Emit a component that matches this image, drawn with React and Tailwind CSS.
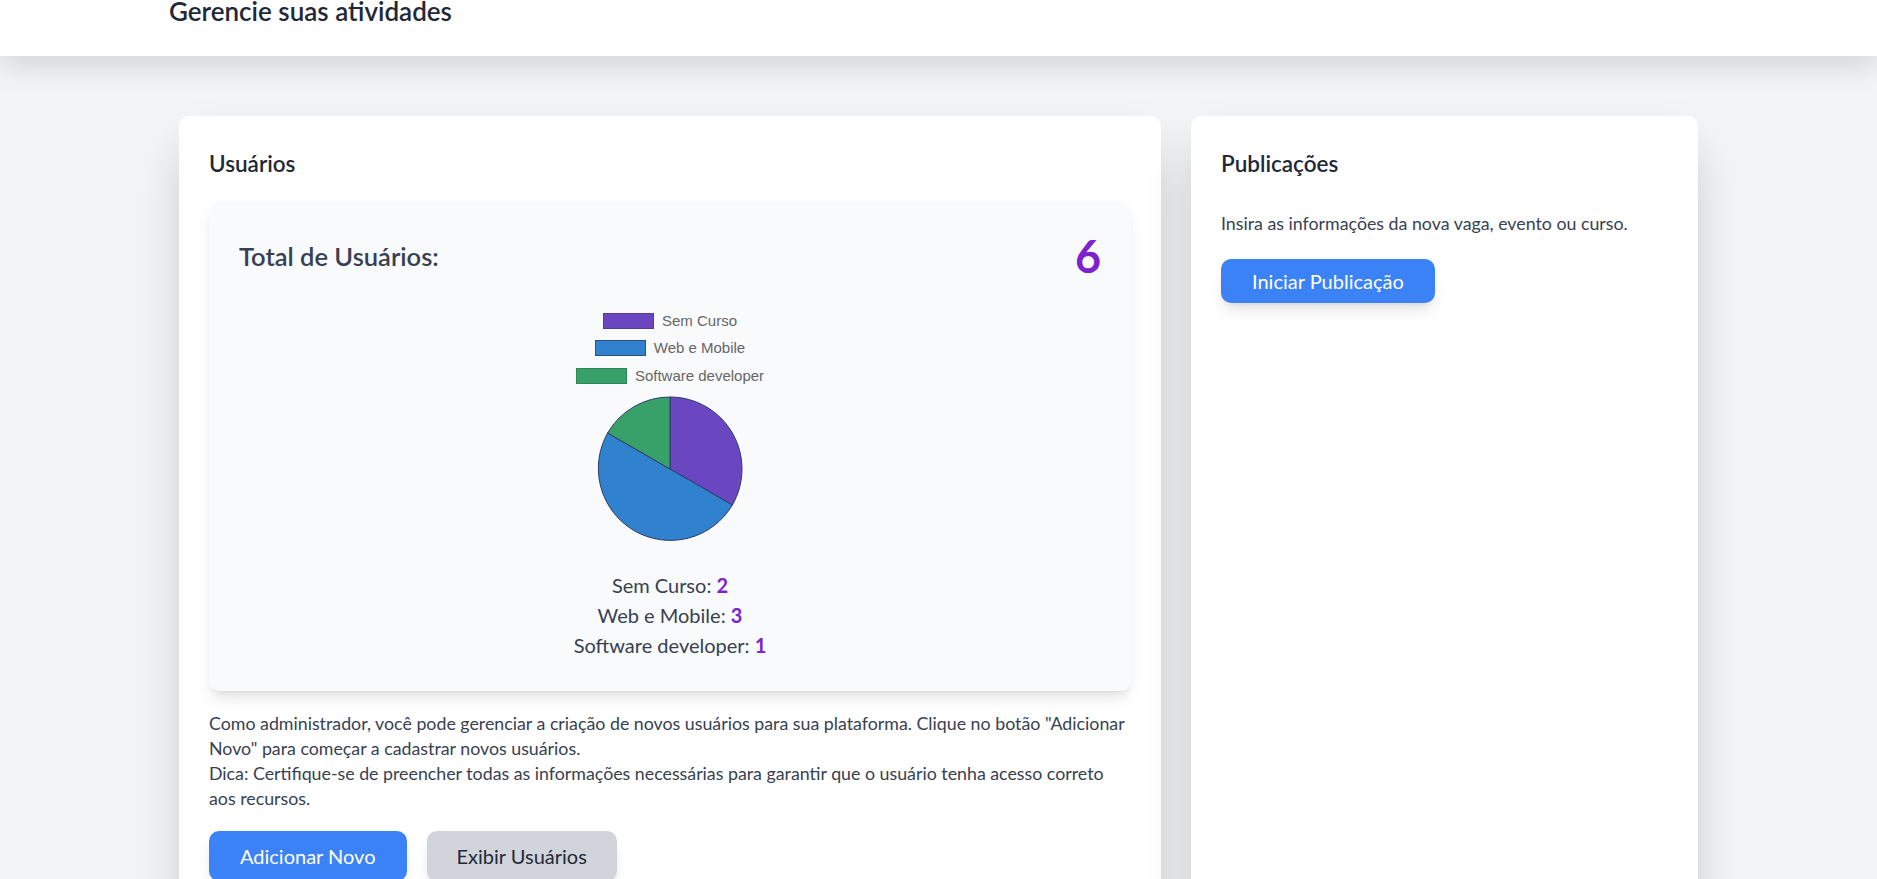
import React from "react";

const stats = [
  { label: "Sem Curso", value: 2, color: "#6b46c1", border: "#553c9a" },
  { label: "Web e Mobile", value: 3, color: "#3182ce", border: "#2c5282" },
  { label: "Software developer", value: 1, color: "#38a169", border: "#2f855a" },
];

// pie drawn by hand, slices start at 12 o'clock and go clockwise
function PieChart() {
  return (
    <svg width="146" height="146" viewBox="0 0 146 146">
      <path
        d="M73 73 L73 1 A72 72 0 0 1 135.35 109 Z"
        fill="#6b46c1"
        stroke="#2d3b66"
        strokeWidth="1"
      />
      <path
        d="M73 73 L135.35 109 A72 72 0 0 1 10.65 37 Z"
        fill="#3182ce"
        stroke="#2d3b66"
        strokeWidth="1"
      />
      <path
        d="M73 73 L10.65 37 A72 72 0 0 1 73 1 Z"
        fill="#38a169"
        stroke="#2d3b66"
        strokeWidth="1"
      />
    </svg>
  );
}

export default function App() {
  return (
    <div className="h-screen overflow-hidden bg-[#f3f4f6] font-['Lato','Noto_Sans',sans-serif]">
      {/* Header */}
      <header className="relative z-10 flex h-[56px] items-start bg-white pl-[169px] shadow-[0_10px_30px_rgba(0,0,0,0.13)]">
        <h1 className="-mt-[2px] text-[26px] font-semibold leading-[26px] text-[#1f2937]">
          Gerencie suas atividades
        </h1>
      </header>

      <main className="flex justify-center gap-[30px] pt-[60px]">
        {/* Usuarios card */}
        <section className="min-h-[820px] w-[982px] rounded-[10px] bg-white p-[30px] shadow-2xl">
          <h2 className="text-[22.5px] font-semibold leading-[35px] text-[#1f2937]">
            Usuários
          </h2>

          <div className="mt-[20px] rounded-[10px] bg-[#f9fafb] px-[30px] pt-[30px] pb-[31px] shadow-lg">
            <div className="flex items-center justify-between">
              <span className="text-[25.5px] font-semibold text-[#374151]">
                Total de Usuários:
              </span>
              <span className="text-[45px] font-bold leading-[50px] text-[#7e22ce]">
                6
              </span>
            </div>

            <div className="mt-[26px] flex flex-col items-center">
              <div className="flex flex-col items-center font-['Liberation_Sans',Arial,sans-serif] text-[15px] text-[#666666]">
                {stats.map((s) => (
                  <div key={s.label} className="flex h-[27.5px] items-center gap-[8px]">
                    <span
                      className="h-[16px] w-[51px] border"
                      style={{ backgroundColor: s.color, borderColor: s.border }}
                    ></span>
                    <span>{s.label}</span>
                  </div>
                ))}
              </div>

              <div className="mt-[6px]">
                <PieChart />
              </div>

              <div className="mt-[28px] flex flex-col items-center text-[20px] leading-[30px] text-[#374151]">
                {stats.map((s) => (
                  <p key={s.label}>
                    {s.label}: <span className="font-bold text-[#7e22ce]">{s.value}</span>
                  </p>
                ))}
              </div>
            </div>
          </div>

          <p className="mt-[20px] text-[17.8px] leading-[25px] text-[#374151]">
            <span className="block whitespace-nowrap">
              Como administrador, você pode gerenciar a criação de novos usuários para sua
              plataforma. Clique no botão "Adicionar
            </span>
            <span className="block whitespace-nowrap">
              Novo" para começar a cadastrar novos usuários.
            </span>
            <span className="block whitespace-nowrap">
              Dica: Certifique-se de preencher todas as informações necessárias para garantir
              que o usuário tenha acesso correto
            </span>
            <span className="block whitespace-nowrap">aos recursos.</span>
          </p>

          <div className="mt-[20px] flex gap-[20px]">
            <button className="rounded-[10px] bg-[#3b82f6] px-[31px] py-[10px] text-[20px] leading-[30px] text-white shadow-lg">
              Adicionar Novo
            </button>
            <button className="rounded-[10px] bg-[#d1d5db] px-[30px] py-[10px] text-[20px] leading-[30px] text-[#1f2937] shadow-lg">
              Exibir Usuários
            </button>
          </div>
        </section>

        {/* Publicacoes card */}
        <section className="min-h-[820px] w-[507px] rounded-[10px] bg-white p-[30px] shadow-2xl">
          <h2 className="text-[22.5px] font-semibold leading-[35px] text-[#1f2937]">
            Publicações
          </h2>
          <p className="mt-[30px] text-[17.8px] leading-[25px] text-[#374151]">
            Insira as informações da nova vaga, evento ou curso.
          </p>
          <button className="mt-[23px] rounded-[10px] bg-[#3b82f6] px-[31px] py-[7px] text-[20px] leading-[30px] text-white shadow-lg">
            Iniciar Publicação
          </button>
        </section>
      </main>
    </div>
  );
}
